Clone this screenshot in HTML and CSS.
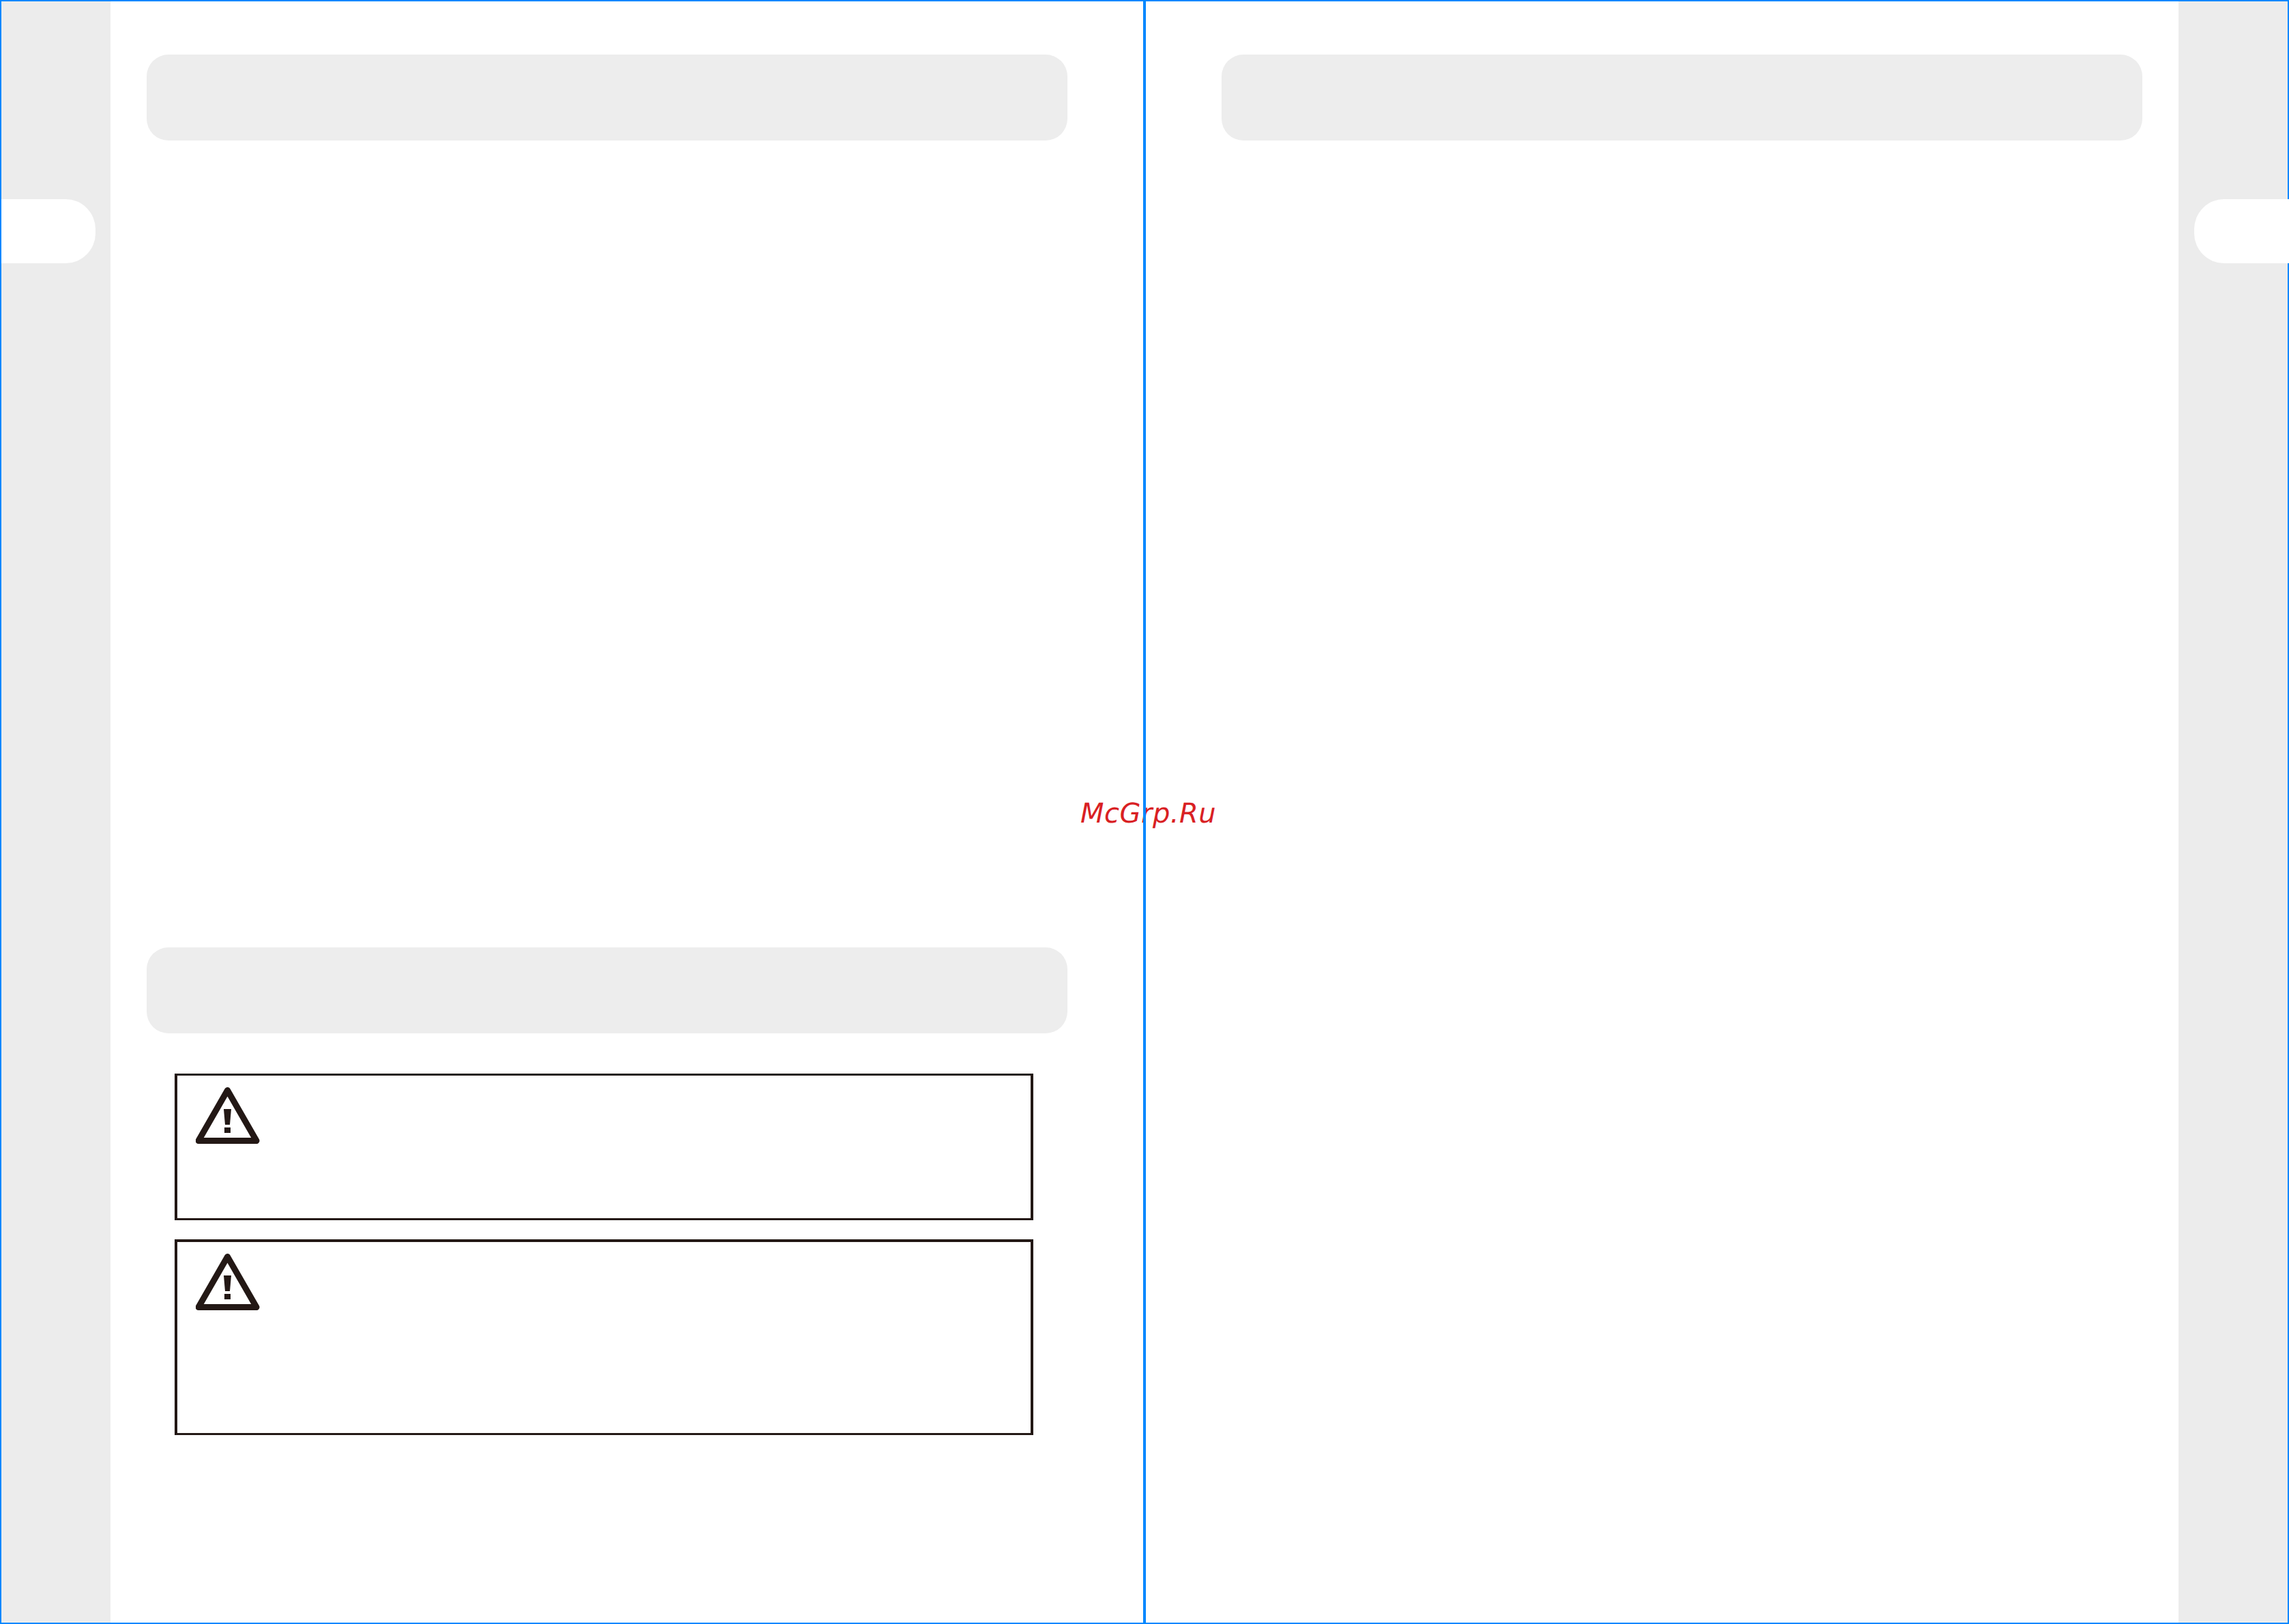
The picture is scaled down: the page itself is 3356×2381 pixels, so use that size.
FILE: index.html
```html
<!DOCTYPE html>
<html lang="en">
<head>
<meta charset="utf-8">
<title>Manual spread</title>
<link rel="stylesheet" href="styles.css">
</head>
<body>
<svg class="defs" width="0" height="0" aria-hidden="true">
  <symbol id="warn" viewBox="0 0 94 84">
    <path d="M46.5 4.5 L89 78.5 L4 78.5 Z" fill="none" stroke="#231815" stroke-width="9" stroke-linejoin="round"/>
    <path d="M41 32 H52 L50 55 H43 Z" fill="#231815"/>
    <rect x="42" y="59" width="9" height="8" fill="#231815"/>
  </symbol>
</svg>
<div class="mark">McGrp.Ru</div>
<main class="spread">
  <section class="page page-left">
    <aside class="side side-left"><div class="tab tab-left"></div></aside>
    <div class="content content-left">
      <div class="panel"></div>
      <div class="panel panel-lower"></div>
      <div class="notice notice-short"><svg class="warn"><use href="#warn"/></svg></div>
      <div class="notice notice-tall"><svg class="warn"><use href="#warn"/></svg></div>
    </div>
  </section>
  <section class="page page-right">
    <div class="content content-right">
      <div class="panel"></div>
    </div>
    <aside class="side side-right"><div class="tab tab-right"></div></aside>
  </section>
</main>
</body>
</html>
```
FILE: styles.css
```css
html, body {
  margin: 0;
  padding: 0;
  background: #fff;
}
body {
  position: relative;
  width: 3356px;
  height: 2381px;
  overflow: hidden;
}
.defs {
  position: absolute;
}
.spread {
  position: relative;
  display: flex;
  width: 3356px;
  height: 2381px;
}
.page {
  box-sizing: border-box;
  width: 1678px;
  height: 2381px;
  border: 2px solid #0087ff;
  display: flex;
}
.side {
  width: 160px;
  flex: none;
  background: #ececec;
  padding-top: 290px;
  box-sizing: border-box;
}
.tab {
  height: 94px;
  background: #fff;
}
.tab-left {
  width: 138px;
  border-radius: 0 44px 44px 0;
}
.tab-right {
  width: 139px;
  margin-left: 23px;
  position: relative;
  border-radius: 44px 0 0 44px;
  box-sizing: border-box;
  margin-right: -2px;
}
.content {
  flex: 1;
  box-sizing: border-box;
  padding-top: 78px;
}
.content-left {
  padding-left: 53px;
  padding-right: 111px;
}
.content-right {
  padding-left: 111px;
  padding-right: 53px;
}
.panel {
  height: 126px;
  border-radius: 32px;
  background: #ededed;
}
.panel-lower {
  margin-top: 1183px;
}
.notice {
  box-sizing: border-box;
  width: 1259px;
  margin-left: 41px;
  border: solid #231815;
  border-width: 3px 4px;
  padding: 17px 0 0 27px;
}
.notice-short {
  height: 215px;
  margin-top: 59px;
}
.notice-tall {
  height: 287px;
  margin-top: 28px;
  border-top-width: 4px;
}
.warn {
  display: block;
  width: 94px;
  height: 84px;
}
.mark {
  position: absolute;
  left: 1584px;
  top: 1170px;
  font: italic 40px/46px "DejaVu Sans", sans-serif;
  letter-spacing: 0.5px;
  text-rendering: geometricPrecision;
  color: #d92023;
}
```
